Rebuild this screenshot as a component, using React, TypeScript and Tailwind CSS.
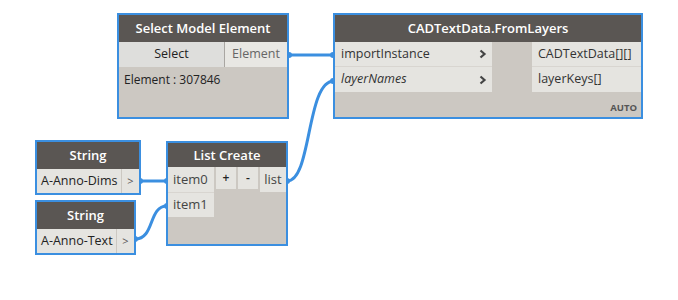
import React from 'react';

const font = { fontFamily: '"Open Sans", "Noto Sans", sans-serif' };

const Header: React.FC<{ title: string }> = ({ title }) => (
    <div className="h-[27px] bg-[#5a5653] text-white text-[13px] font-semibold flex items-center justify-center leading-none">
        {title}
    </div>
);

const Chevron: React.FC = () => (
    <svg width="8" height="10" viewBox="0 0 8 10" className="shrink-0">
        <path d="M1.5 1.5 L5.5 5 L1.5 8.5" fill="none" stroke="#444" strokeWidth="2.2" />
    </svg>
);

export default function App() {
    return (
        <div className="relative w-[678px] h-[300px] bg-white overflow-hidden text-[#333]" style={font}>
            {/* wires */}
            <svg className="absolute inset-0" width="678" height="300">
                <g fill="none" stroke="#3b8fe0" strokeWidth="3">
                    <path d="M288 55 L334 55" />
                    <path d="M287 181 C 312 181, 306 81, 334 81" />
                    <path d="M140 181 L167 181" />
                    <path d="M135 239 C 155 239, 148 206, 167 206" />
                </g>
                <g fill="#3b8fe0">
                    <circle cx="289" cy="55" r="3" />
                    <circle cx="333" cy="55" r="3" />
                    <circle cx="333" cy="81" r="3" />
                    <circle cx="287" cy="181" r="3" />
                    <circle cx="140" cy="181" r="3" />
                    <circle cx="167" cy="181" r="3" />
                    <circle cx="135" cy="239" r="3" />
                    <circle cx="167" cy="206" r="3" />
                </g>
            </svg>

            {/* Select Model Element */}
            <div className="absolute left-[117px] top-[13px] w-[172px] h-[106px] border-2 border-[#3b8fe0] bg-[#ccc8c2] flex flex-col">
                <Header title="Select Model Element" />
                <div className="flex h-[25px]">
                    <div className="w-[106px] bg-[#dededc] border-r border-[#a9a6a2] flex items-center justify-center text-[12.5px] text-[#222]">Select</div>
                    <div className="flex-1 bg-[#e8e7e3] flex items-center justify-center text-[12.5px] text-[#666]">Element</div>
                </div>
                <div className="pl-[5px] pt-[4px] text-[12px] text-[#222]">Element : 307846</div>
            </div>

            {/* CADTextData.FromLayers */}
            <div className="absolute left-[333px] top-[13px] w-[310px] h-[106px] border-2 border-[#3b8fe0] bg-[#ccc8c2] flex flex-col">
                <Header title="CADTextData.FromLayers" />
                <div className="flex">
                    <div className="w-[157px] flex flex-col">
                        <div className="h-[25px] bg-[#e5e4e0] border-b border-[#d8d5d0] flex items-center justify-between pl-[6px] pr-[5px] text-[12.5px]">
                            importInstance <Chevron />
                        </div>
                        <div className="h-[25px] bg-[#e5e4e0] flex items-center justify-between pl-[6px] pr-[5px] text-[12.5px] italic">
                            layerNames <Chevron />
                        </div>
                    </div>
                    <div className="flex-1" />
                    <div className="w-[109px] flex flex-col">
                        <div className="h-[25px] bg-[#e5e4e0] border-b border-[#d8d5d0] flex items-center pl-[6px] text-[12.5px]">CADTextData[][]</div>
                        <div className="h-[25px] bg-[#e5e4e0] flex items-center pl-[6px] text-[12.5px]">layerKeys[]</div>
                    </div>
                </div>
                <div className="flex-1 flex items-end justify-end pr-[4px] pb-[5px] text-[9.5px] font-bold text-[#555] leading-none">AUTO</div>
            </div>

            {/* String 1 */}
            <div className="absolute left-[35px] top-[140px] w-[106px] h-[55px] border-2 border-[#3b8fe0] bg-[#ccc8c2] flex flex-col">
                <Header title="String" />
                <div className="flex h-[24px]">
                    <div className="w-[84px] bg-[#e5e4e0] flex items-center pl-[4px] text-[12.5px] text-[#222]">A-Anno-Dims</div>
                    <div className="flex-1 ml-px bg-[#e5e4e0] flex items-center justify-center text-[11px] text-[#555]">&gt;</div>
                </div>
            </div>

            {/* String 2 */}
            <div className="absolute left-[35px] top-[200px] w-[101px] h-[55px] border-2 border-[#3b8fe0] bg-[#ccc8c2] flex flex-col">
                <Header title="String" />
                <div className="flex h-[24px]">
                    <div className="w-[79px] bg-[#e5e4e0] flex items-center pl-[4px] text-[12.5px] text-[#222]">A-Anno-Text</div>
                    <div className="flex-1 ml-px bg-[#e5e4e0] flex items-center justify-center text-[11px] text-[#555]">&gt;</div>
                </div>
            </div>

            {/* List Create */}
            <div className="absolute left-[166px] top-[141px] w-[122px] h-[105px] border-2 border-[#3b8fe0] bg-[#ccc8c2] flex flex-col">
                <div className="h-[24px] bg-[#5a5653] text-white text-[13px] font-semibold flex items-center justify-center leading-none">List Create</div>
                <div className="flex h-[25px]">
                    <div className="w-[46px] bg-[#e5e4e0] flex items-center pl-[5px] text-[13px] text-[#444]">item0</div>
                    <div className="w-[20px] ml-[2px] h-[22px] bg-[#e5e4e0] flex items-center justify-center text-[12px] font-semibold text-[#222]">+</div>
                    <div className="w-[20px] ml-[2px] h-[22px] bg-[#e5e4e0] flex items-center justify-center text-[12px] font-semibold text-[#222]">-</div>
                    <div className="flex-1 ml-[2px] bg-[#e5e4e0] flex items-center justify-center text-[13px] text-[#444]">list</div>
                </div>
                <div className="flex h-[25px]">
                    <div className="w-[46px] bg-[#e5e4e0] flex items-center pl-[5px] text-[13px] text-[#444] border-t border-[#d8d5d0]">item1</div>
                </div>
            </div>
        </div>
    );
}
